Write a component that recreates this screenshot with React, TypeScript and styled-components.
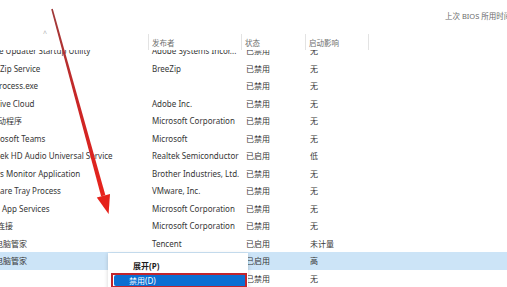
import React from 'react';
import styled, { createGlobalStyle } from 'styled-components';

const GlobalStyle = createGlobalStyle`
  html, body {
    margin: 0;
    padding: 0;
    background: #ffffff;
  }
  body {
    font-family: 'Noto Sans', 'Noto Sans CJK SC', sans-serif;
  }
`;

const COLS = '148px 93px 64px 63px 1fr';

const Page = styled.div`
  position: relative;
  width: 507px;
  height: 287px;
  overflow: hidden;
  background: #ffffff;
  color: #333333;
  font-size: 8px;
`;

const TopBar = styled.div`
  height: 30px;
  display: flex;
  align-items: center;
  padding-left: 445px;
  white-space: nowrap;
  color: #6b6b6b;
  font-size: 7.5px;
`;

const HeaderRow = styled.div`
  display: grid;
  grid-template-columns: ${COLS};
  height: 20px;
  background: #ffffff;
  position: relative;
  z-index: 1;
`;

const HeaderCell = styled.div<{ $sep?: boolean; $sort?: boolean }>`
  display: flex;
  align-items: ${({ $sort }) => ($sort ? 'flex-start' : 'center')};
  justify-content: ${({ $sort }) => ($sort ? 'center' : 'flex-start')};
  padding-left: ${({ $sort }) => ($sort ? '0' : '3px')};
  margin-top: ${({ $sort }) => ($sort ? '0' : '4px')};
  border-left: ${({ $sep }) => ($sep ? '1px solid #e3e3e3' : 'none')};
  color: #707070;
  font-size: 7.5px;
`;

const SortCaret = styled.span`
  display: block;
  margin: 1px 0 0 -58px;
  color: #b0b0b0;
  font-size: 7px;
  line-height: 6px;
`;

const Body = styled.div`
  height: 237px;
  overflow: hidden;
`;

const List = styled.div`
  margin-top: -8px;
`;

const Row = styled.div<{ $selected?: boolean }>`
  display: grid;
  grid-template-columns: ${COLS};
  height: 17.5px;
  align-items: center;
  white-space: nowrap;
  background: ${({ $selected }) => ($selected ? '#cce4f7' : 'transparent')};
`;

const Cell = styled.div<{ $pad?: number }>`
  padding-left: ${({ $pad }) => $pad ?? 4}px;
  overflow: hidden;
  color: #363636;
`;

const NameCell = styled(Cell)<{ $shift?: number }>`
  text-indent: ${({ $shift }) => $shift ?? 0}px;
`;

const Menu = styled.div`
  position: absolute;
  left: 108px;
  top: 253px;
  width: 140px;
  height: 40px;
  background: #ffffff;
  box-shadow: 0 1px 4px rgba(0, 0, 0, 0.18);
  padding-top: 6px;
  box-sizing: border-box;
  z-index: 3;
`;

const MenuItem = styled.div<{ $bold?: boolean }>`
  height: 13px;
  display: flex;
  align-items: center;
  padding-left: 25px;
  font-weight: ${({ $bold }) => ($bold ? 700 : 400)};
  color: #1c1c1c;
`;

const Marked = styled.div`
  margin: 1px 1px 0 3px;
  border: 2px solid #c0252d;
  padding: 0;
`;

const ActiveItem = styled.div`
  height: 11px;
  margin-left: 1px;
  display: flex;
  align-items: center;
  padding-left: 15px;
  background: #0b6fd2;
  color: #ffffff;
  border-radius: 2px 0 0 2px;
`;

const Overlay = styled.svg`
  position: absolute;
  left: 0;
  top: 0;
  pointer-events: none;
  z-index: 4;
`;

type Item = {
  name: string;
  shift?: number;
  publisher: string;
  status: string;
  impact: string;
  selected?: boolean;
};

const rows: Item[] = [
  { name: 'e Updater Startup Utility', shift: -1, publisher: 'Adobe Systems Incor...', status: '已禁用', impact: '无' },
  { name: 'Zip Service', publisher: 'BreeZip', status: '已禁用', impact: '无' },
  { name: 'rocess.exe', shift: -1, publisher: '', status: '已禁用', impact: '无' },
  { name: 'ive Cloud', publisher: 'Adobe Inc.', status: '已禁用', impact: '无' },
  { name: '动程序', shift: -2, publisher: 'Microsoft Corporation', status: '已禁用', impact: '无' },
  { name: 'osoft Teams', publisher: 'Microsoft', status: '已禁用', impact: '无' },
  { name: 'ek HD Audio Universal Service', publisher: 'Realtek Semiconductor', status: '已启用', impact: '低' },
  { name: 's Monitor Application', publisher: 'Brother Industries, Ltd.', status: '已禁用', impact: '无' },
  { name: 'are Tray Process', publisher: 'VMware, Inc.', status: '已禁用', impact: '无' },
  { name: ' App Services', shift: 2, publisher: 'Microsoft Corporation', status: '已禁用', impact: '无' },
  { name: '连接', shift: -3, publisher: 'Microsoft Corporation', status: '已禁用', impact: '无' },
  { name: '电脑管家', shift: -5, publisher: 'Tencent', status: '已启用', impact: '未计量' },
  { name: '电脑管家', shift: -5, publisher: '', status: '已启用', impact: '高', selected: true },
  { name: '', publisher: '', status: '已禁用', impact: '无' },
];

const Arrow = () => (
  <Overlay width="507" height="287" viewBox="0 0 507 287">
    <defs>
      <linearGradient id="arrowRed" x1="0" y1="0" x2="0" y2="1">
        <stop offset="0" stopColor="#9e3a3a" />
        <stop offset="0.5" stopColor="#c92626" />
        <stop offset="1" stopColor="#e8231c" />
      </linearGradient>
    </defs>
    <polygon
      points="51.2,9.2 52.8,8.8 105.4,195.2 101.1,196.3"
      fill="url(#arrowRed)"
    />
    <polygon points="96.8,197.6 110,194 108.6,214" fill="#e5221b" />
  </Overlay>
);

const App = (): React.ReactElement => (
  <Page>
    <GlobalStyle />
    <TopBar>上次 BIOS 所用时间</TopBar>
    <HeaderRow>
      <HeaderCell $sort>
        <SortCaret>^</SortCaret>
      </HeaderCell>
      <HeaderCell $sep>发布者</HeaderCell>
      <HeaderCell $sep>状态</HeaderCell>
      <HeaderCell $sep>启动影响</HeaderCell>
      <HeaderCell $sep />
    </HeaderRow>
    <Body>
      <List>
        {rows.map((r, i) => (
          <Row key={i} $selected={r.selected}>
            <NameCell $pad={0} $shift={r.shift}>
              {r.name}
            </NameCell>
            <Cell>{r.publisher}</Cell>
            <Cell $pad={5}>{r.status}</Cell>
            <Cell $pad={5}>{r.impact}</Cell>
            <Cell />
          </Row>
        ))}
      </List>
    </Body>
    <Menu>
      <MenuItem $bold>展开(P)</MenuItem>
      <Marked>
        <ActiveItem>禁用(D)</ActiveItem>
      </Marked>
    </Menu>
    <Arrow />
  </Page>
);

export default App;
